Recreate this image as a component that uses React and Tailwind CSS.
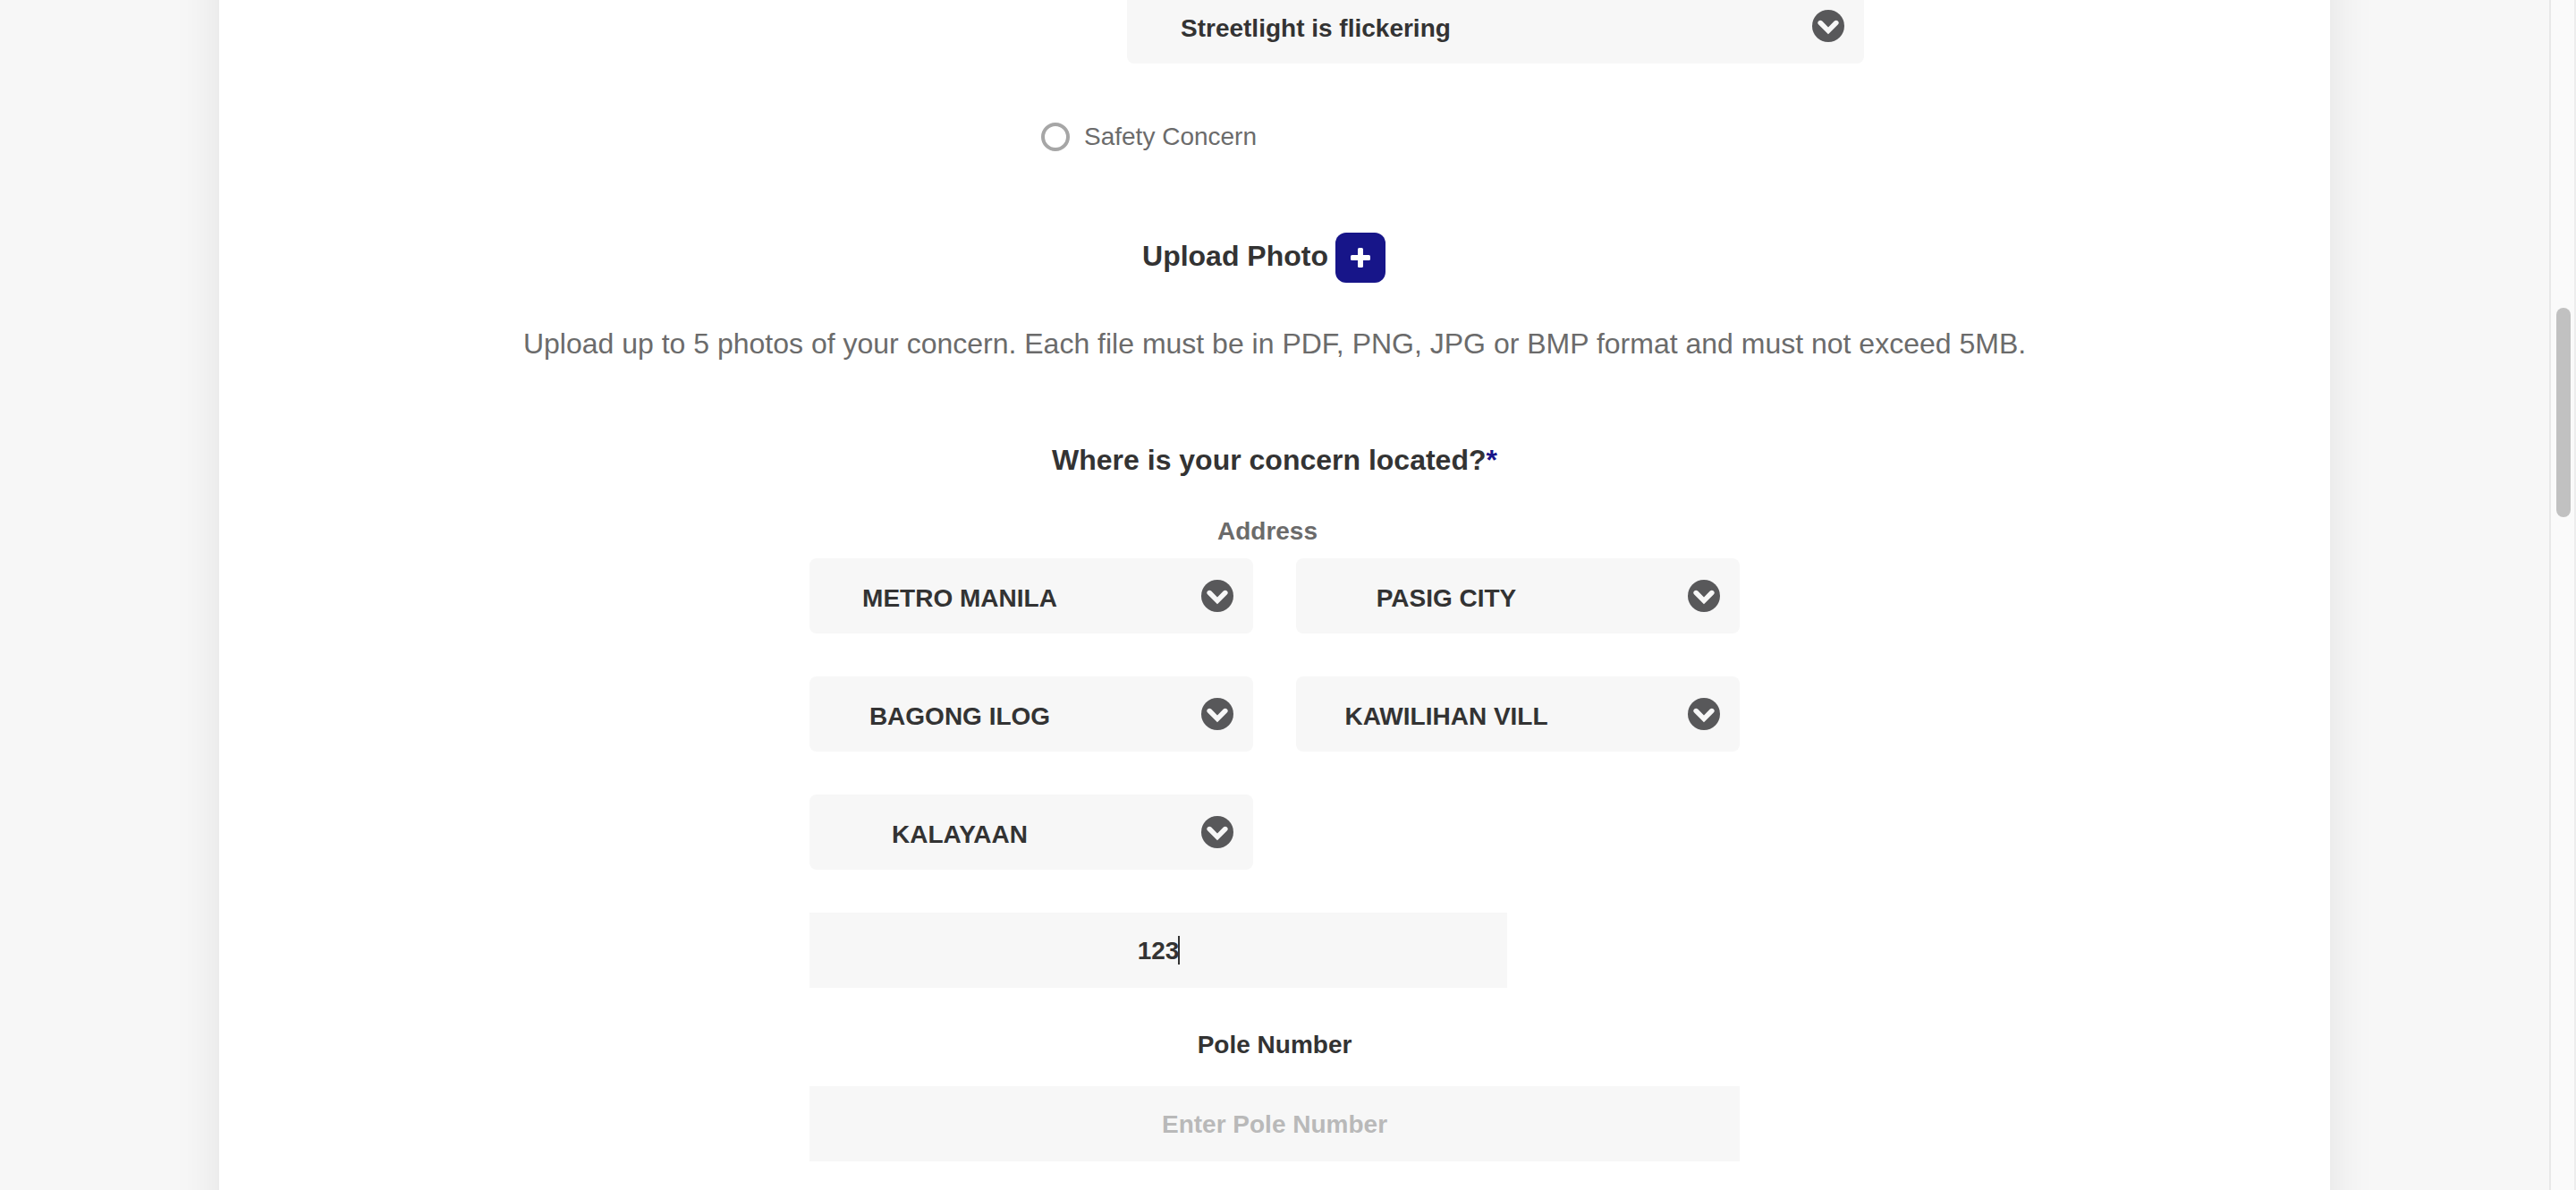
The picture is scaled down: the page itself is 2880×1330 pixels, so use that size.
import React from "react";

function ArrowBadge() {
  return (
    <svg
      viewBox="0 0 36 36"
      aria-hidden="true"
      className="pointer-events-none absolute right-[22px] top-6 size-9"
    >
      <circle cx="18" cy="18" r="18" fill="#58585a" />
      <path
        d="M9.2 14.6 L18 23.4 L26.8 14.6"
        fill="none"
        stroke="#f7f7f7"
        strokeWidth="5.6"
        strokeLinecap="round"
      />
    </svg>
  );
}

function SelectBox({ label, value, left = false }) {
  return (
    <div className="relative">
      <select
        aria-label={label}
        defaultValue={value}
        className={
          "block h-[84px] w-full appearance-none rounded-lg bg-[#f7f7f7] pt-1.5 text-[28px] font-bold text-[#333333] outline-none " +
          (left ? "pl-[60px] pr-20 text-left" : "pr-40 text-center")
        }
      >
        <option>{value}</option>
      </select>
      <ArrowBadge />
    </div>
  );
}

const inputStyle =
  "block h-[84px] w-full rounded-none bg-[#f7f7f7] pt-0.5 text-center text-[28px] font-bold text-[#333333] outline-none placeholder:text-[#b9b9b9]";

export default function App() {
  return (
    <div className="flex min-h-screen bg-[#f7f7f7] font-['Liberation_Sans',Arial,sans-serif] text-[#333333]">
      <div className="flex flex-1 overflow-hidden px-[245px]">
        <main className="-my-20 flex-1 bg-white pt-20 pb-28 shadow-[0_0_50px_rgba(0,0,0,0.09)]">
          <div className="mx-auto -mt-[13px] max-w-[1318px]">
            <div className="ml-auto max-w-[824px]">
              <SelectBox label="Streetlight issue" value="Streetlight is flickering" left />
            </div>
            <label className="mt-[62px] ml-[398px] flex w-fit items-center gap-4 text-[28px] leading-10 text-[#6b6b6b]">
              <input
                type="radio"
                name="concern"
                className="size-8 appearance-none rounded-full border-4 border-[#a6a6a6] bg-white"
              />
              Safety Concern
            </label>
          </div>

          <div className="mt-[87px] flex items-start justify-center gap-2 pr-6">
            <h2 className="text-[32px] leading-[52px] font-bold">Upload Photo</h2>
            <button
              type="button"
              aria-label="Add photo"
              className="flex size-14 items-center justify-center rounded-xl bg-[#171589]"
            >
              <svg viewBox="0 0 24 24" className="size-6" fill="#ffffff" aria-hidden="true">
                <rect x="9" y="1" width="6" height="22" rx="1.6" />
                <rect x="1" y="9" width="22" height="6" rx="1.6" />
              </svg>
            </button>
          </div>
          <p className="mt-11 text-center text-[32px] leading-[48px] text-[#6b6b6b]">
            Upload up to 5 photos of your concern. Each file must be in PDF, PNG, JPG or BMP format
            and must not exceed 5MB.
          </p>

          <h2 className="mt-[82px] text-center text-[32px] leading-[48px] font-bold">
            Where is your concern located?<span className="text-[#171589]">*</span>
          </h2>

          <div className="mx-auto max-w-[1040px]">
            <h3 className="mt-9 pr-4 text-center text-[28px] leading-10 font-bold text-[#6b6b6b]">
              Address
            </h3>
            <div className="mt-2.5 grid grid-cols-2 gap-12">
              <SelectBox label="Province" value="METRO MANILA" />
              <SelectBox label="City" value="PASIG CITY" />
              <SelectBox label="Barangay" value="BAGONG ILOG" />
              <SelectBox label="Subdivision" value="KAWILIHAN VILL" />
              <SelectBox label="Street" value="KALAYAAN" />
            </div>
            <div className="relative mt-12 w-3/4">
              <input type="text" aria-label="House number" defaultValue="123" className={inputStyle} />
              <span className="pointer-events-none absolute top-[26px] left-1/2 ml-[22px] h-8 w-0.5 bg-[#333333]" />
            </div>
            <label
              htmlFor="pole"
              className="mt-11 block text-center text-[28px] leading-10 font-bold"
            >
              Pole Number
            </label>
            <div className="mt-[26px]">
              <input id="pole" type="text" placeholder="Enter Pole Number" className={inputStyle} />
            </div>
          </div>
        </main>
      </div>

      <div
        aria-hidden="true"
        className="w-[30px] border-x-2 border-l-[#e8e8e8] border-r-[#ededed] bg-[#fafafa] pt-[344px] pl-1.5"
      >
        <div className="h-[234px] w-4 rounded-full bg-[#c1c1c1]" />
      </div>
    </div>
  );
}
